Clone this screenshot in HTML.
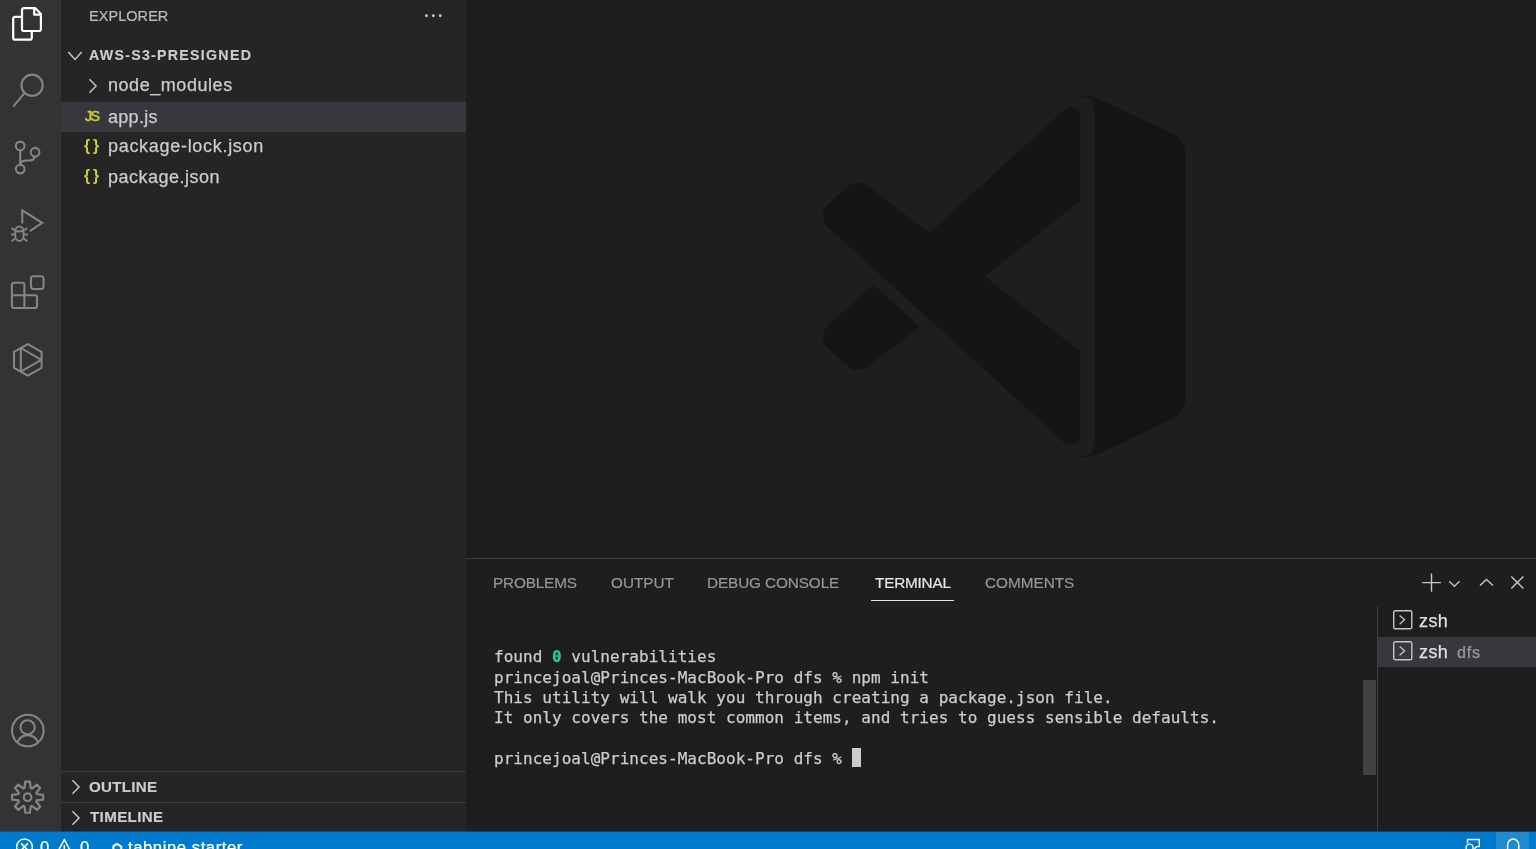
<!DOCTYPE html>
<html lang="en">
<head>
<meta charset="utf-8">
<title>aws-s3-presigned - Visual Studio Code</title>
<style>
*{box-sizing:border-box;margin:0;padding:0}
html,body{width:1536px;height:849px;overflow:hidden;background:#1e1e1e}
body{position:relative;font-family:"Liberation Sans",sans-serif;color:#cccccc}
.abs{position:absolute}
#activity{left:0;top:0;width:61px;height:831px;background:#333333}
#sidebar{left:61px;top:0;width:405px;height:831px;background:#252526}
#editor{left:466px;top:0;width:1070px;height:558px;background:#1e1e1e;overflow:hidden}
#panel{left:466px;top:558px;width:1070px;height:273px;background:#1e1e1e;border-top:1px solid #3d3d3d}
#panel>*{margin-top:-1px}
#status{left:0;top:831px;width:1536px;height:18px;background:#007acc;overflow:hidden}
#sttop{left:0;top:831px;width:1536px;height:1px;background:linear-gradient(to right,#234d69 0,#234d69 61px,#1a4764 61px,#1a4764 466px,#154462 466px)}
.t{position:absolute;white-space:nowrap;line-height:1;will-change:transform}
svg{position:absolute;overflow:visible}
.hdr{color:#bbbbbb;-webkit-text-stroke:0.2px #bbbbbb}
.sec{font-weight:bold;color:#cccccc;-webkit-text-stroke:0.15px #cccccc}
.row{color:#cccccc;-webkit-text-stroke:0.25px currentColor}
.sel{left:0;width:405px;background:#37373d}
.line{left:0;width:405px;height:1px;background:#3c3c3d}
.tab{color:#969696;-webkit-text-stroke:0.2px currentColor}
.tab.on{color:#e7e7e7}
.term{font-family:"DejaVu Sans Mono","Liberation Mono",monospace;color:#cccccc;white-space:pre;-webkit-text-stroke:0.25px #cccccc}
.term b{-webkit-text-stroke:0.25px #23d18b}
.st{color:#ffffff;-webkit-text-stroke:0.25px #ffffff}
</style>
</head>
<body>
<div id="activity" class="abs">
<svg width="61" height="61" style="left:0;top:0" viewBox="0 0 61 61" fill="none" stroke="#ffffff" stroke-width="2.2" stroke-linejoin="round" stroke-linecap="round">
<path d="M24.2 8.1 H35.2 L40.9 14 V29 Q40.9 31 38.9 31 H24 Q22 31 22 29 V10.1 Q22 8.1 24.2 8.1 Z"/>
<path d="M34.2 8.3 V14.7 H40.7"/>
<path d="M21.6 16.9 H15.2 Q13.2 16.9 13.2 18.9 V37.7 Q13.2 39.7 15.2 39.7 H29.8 Q31.8 39.7 31.8 37.7 V31.4"/>
</svg>
<svg width="61" height="61" style="left:0;top:60px" viewBox="0 60 61 61" fill="none" stroke="#858585" stroke-width="2.1" stroke-linecap="round">
<circle cx="32.1" cy="85.2" r="10.6"/><path d="M24.4 93.2 L13.8 105.9"/></svg>
<svg width="61" height="61" style="left:0;top:126px" viewBox="0 126 61 61" fill="none" stroke="#858585" stroke-width="2.1" stroke-linecap="round">
<circle cx="20.2" cy="145.9" r="4.3"/><circle cx="20.2" cy="169.1" r="4.3"/><circle cx="35.1" cy="152.2" r="4.3"/>
<path d="M20.2 150.4 V164.6"/><path d="M34.6 156.7 C33.5 161.6 30 160.2 25 160.6 C22 161 20.4 162.4 20.2 164.4"/></svg>
<svg width="61" height="61" style="left:0;top:194px" viewBox="0 194 61 61" fill="none" stroke="#858585" stroke-width="2" stroke-linecap="butt" stroke-linejoin="miter">
<path d="M22.3 223.6 V210.4 L42.2 222.8 L29.8 231.2"/>
<rect x="15.2" y="226.5" width="8.4" height="14.4" rx="4.2" ry="4.9"/>
<path d="M15.3 231.3 H23.5"/>
<path d="M11.5 228 L14.7 230.3 M10.9 234.6 H14.4 M11.5 241.3 L14.9 238.7 M27.3 228 L24.1 230.3 M27.9 234.6 H24.4 M27.3 241.3 L23.9 238.7"/></svg>
<svg width="61" height="61" style="left:0;top:262px" viewBox="0 262 61 61" fill="none" stroke="#858585" stroke-width="2.1" stroke-linejoin="round">
<rect x="31" y="276.2" width="12.5" height="12.8" rx="2.4"/>
<path d="M24.4 295.3 V284.8 Q24.4 282.8 22.4 282.8 H13.9 Q11.9 282.8 11.9 284.8 V306 Q11.9 308 13.9 308 H35 Q37 308 37 306 V297.3 Q37 295.3 35 295.3 H11.9 M24.4 295.3 V308"/></svg>
<svg width="61" height="61" style="left:0;top:328px" viewBox="0 328 61 61" fill="none" stroke="#858585" stroke-width="2" stroke-linejoin="round">
<path d="M27.7 344.1 L41.6 351.9 V367.8 L27.7 375.6 L14 367.8 V351.9 Z"/>
<path d="M20.8 347.9 V371.8 M20.8 348 L41.3 359.8 L20.8 371.7"/></svg>
<svg width="61" height="61" style="left:0;top:700px" viewBox="0 700 61 61" fill="none" stroke="#858585" stroke-width="2.1">
<circle cx="27.8" cy="730.5" r="15.8"/><circle cx="27.6" cy="727.3" r="7.1"/>
<path d="M17.4 742.3 C19.5 737.3 23 735.1 27.6 735.1 C32.2 735.1 36 737.3 38.2 742.3"/></svg>
<svg width="61" height="61" style="left:0;top:766px" viewBox="0 766 61 61" fill="none" stroke="#858585" stroke-width="2.2" stroke-linejoin="miter">
<path d="M24.46 788.02 L25.33 781.66 L29.87 781.66 L30.74 788.02 L31.87 788.49 L36.98 784.61 L40.19 787.82 L36.31 792.93 L36.78 794.06 L43.14 794.93 L43.14 799.47 L36.78 800.34 L36.31 801.47 L40.19 806.58 L36.98 809.79 L31.87 805.91 L30.74 806.38 L29.87 812.74 L25.33 812.74 L24.46 806.38 L23.33 805.91 L18.22 809.79 L15.01 806.58 L18.89 801.47 L18.42 800.34 L12.06 799.47 L12.06 794.93 L18.42 794.06 L18.89 792.93 L15.01 787.82 L18.22 784.61 L23.33 788.49 Z"/><circle cx="27.6" cy="797.2" r="3.8"/></svg>
</div>
<div id="sidebar" class="abs">
<div class="t hdr" style="left:28.00px;top:8.73px;font-size:14.5px;letter-spacing:0.05px">EXPLORER</div>
<svg width="24" height="8" style="left:360px;top:12px" viewBox="421 12 24 8"><circle cx="426.4" cy="15.8" r="1.45" fill="#c5c5c5"/><circle cx="433.35" cy="15.8" r="1.45" fill="#c5c5c5"/><circle cx="440.3" cy="15.8" r="1.45" fill="#c5c5c5"/></svg>
<svg width="20" height="16" style="left:4.00px;top:48.10px" viewBox="-10 -8 20 16" fill="none" stroke="#c5c5c5" stroke-width="1.5" stroke-linecap="square"><path d="M-6.2 -3.4 L0 3.4 L6.2 -3.4"/></svg>
<div class="t sec" style="left:28.00px;top:48.18px;font-size:14.2px;letter-spacing:1.28px">AWS-S3-PRESIGNED</div>
<svg width="16" height="20" style="left:24.00px;top:75.60px" viewBox="-8 -10 16 20" fill="none" stroke="#c5c5c5" stroke-width="1.5" stroke-linecap="square"><path d="M-3.05 -6.2 L3.05 0 L-3.05 6.2"/></svg>
<div class="t row" style="left:47.40px;top:75.96px;font-size:18px;letter-spacing:0.55px">node_modules</div>
<div class="abs sel" style="top:101.5px;height:30.3px"></div>
<div class="t js" style="left:23.60px;top:109.31px;font-size:14.4px;color:#cbcb41;letter-spacing:-1.6px;-webkit-text-stroke:0.5px #cbcb41">JS</div>
<div class="t row" style="left:47.40px;top:107.76px;font-size:18px;letter-spacing:0.3px">app.js</div>
<div class="t js" style="left:22.60px;top:137.63px;font-size:15.8px;font-weight:bold;color:#cbcb41;letter-spacing:-0.1px">{&thinsp;}</div>
<div class="t row" style="left:47.40px;top:137.36px;font-size:18px;letter-spacing:0.7px">package-lock.json</div>
<div class="t js" style="left:22.60px;top:168.43px;font-size:15.8px;font-weight:bold;color:#cbcb41;letter-spacing:-0.1px">{&thinsp;}</div>
<div class="t row" style="left:47.40px;top:168.16px;font-size:18px;letter-spacing:0.5px">package.json</div>
<div class="abs line" style="top:771px"></div>
<svg width="16" height="20" style="left:6.60px;top:776.70px" viewBox="-8 -10 16 20" fill="none" stroke="#c5c5c5" stroke-width="1.5" stroke-linecap="square"><path d="M-3.05 -6.2 L3.05 0 L-3.05 6.2"/></svg>
<div class="t sec" style="left:28.00px;top:778.62px;font-size:15.1px;letter-spacing:0.3px">OUTLINE</div>
<div class="abs line" style="top:802px"></div>
<svg width="16" height="20" style="left:6.60px;top:807.50px" viewBox="-8 -10 16 20" fill="none" stroke="#c5c5c5" stroke-width="1.5" stroke-linecap="square"><path d="M-3.05 -6.2 L3.05 0 L-3.05 6.2"/></svg>
<div class="t sec" style="left:28.50px;top:808.92px;font-size:15.1px;letter-spacing:0.38px">TIMELINE</div>
</div>
<div id="editor" class="abs">
<svg width="362.5" height="362.5" style="left:357.0px;top:94.5px" viewBox="0 0 100 100">
<path d="M29.3551 38.0415 L12.1872 25.0096C10.589 23.7965 8.35363 23.8959 6.86933 25.2461L1.36303 30.2549C-0.452552 31.9064 -0.454633 34.7627 1.35853 36.417L66.47 95.78 A2.65 2.65 0 0 0 70.9 93.82 L70.9 70.7 L44.6 50.1 L70.9 29.2 L70.9 6.15 A2.65 2.65 0 0 0 66.47 4.19 Z" fill="#151515"/>
<path d="M13.9 52.25 L1.35853 63.5832C-0.454633 65.2374 -0.452552 68.0938 1.36303 69.7453L6.86933 74.7541C8.35363 76.1043 10.589 76.2037 12.1872 74.9905L26.75 63.95 Z" fill="#151515"/>
<path d="M75.8578 99.1263C73.6 100.2 72 100.1 70.8 99.5C72.9 99.9 75 98.5895 75 95.3278V4.67213C75 1.41039 72.9 0.1 70.8 0.5C72 -0.1 73.6 -0.2 75.8578 0.873633L96.4587 10.7807C98.6234 11.8217 100 14.0112 100 16.4132V83.5871C100 85.9891 98.6234 88.1786 96.4586 89.2196L75.8578 99.1263Z" fill="#151515"/>
</svg>
</div>
<div id="panel" class="abs">
<div class="t tab" style="left:26.80px;top:17.25px;font-size:15.3px;letter-spacing:-0.15px">PROBLEMS</div>
<div class="t tab" style="left:144.60px;top:17.25px;font-size:15.3px;letter-spacing:0px">OUTPUT</div>
<div class="t tab" style="left:241.20px;top:17.25px;font-size:15.3px;letter-spacing:-0.1px">DEBUG CONSOLE</div>
<div class="t tab on" style="left:408.50px;top:17.25px;font-size:15.3px;letter-spacing:-0.2px">TERMINAL</div>
<div class="t tab" style="left:519.30px;top:17.25px;font-size:15.3px;letter-spacing:0px">COMMENTS</div>
<div class="abs" style="left:404.79999999999995px;top:41.799999999999955px;width:83.2px;height:1.4px;background:#e7e7e7"></div>
<svg width="120" height="30" style="left:950px;top:10px" viewBox="1416 568 120 30" fill="none" stroke="#c5c5c5" stroke-width="1.45">
<path d="M1431.5 573.4 V591.8 M1422.2 582.6 H1440.9"/>
<path d="M1449.2 581.2 L1454.4 586.3 L1459.6 581.2" stroke-width="1.3"/>
<path d="M1480 585.6 L1486.5 579.4 L1493 585.6"/>
<path d="M1511.3 576.6 L1523.4 588.5 M1523.4 576.6 L1511.3 588.5"/></svg>
<div class="t term" style="left:28.19999999999999px;top:91.26px;font-size:16.0px;letter-spacing:0.034px">found <b style="color:#23d18b">0</b> vulnerabilities</div>
<div class="t term" style="left:28.19999999999999px;top:111.56px;font-size:16.0px;letter-spacing:0.034px">princejoal@Princes-MacBook-Pro dfs % npm init</div>
<div class="t term" style="left:28.19999999999999px;top:131.76px;font-size:16.0px;letter-spacing:0.034px">This utility will walk you through creating a package.json file.</div>
<div class="t term" style="left:28.19999999999999px;top:152.06px;font-size:16.0px;letter-spacing:0.034px">It only covers the most common items, and tries to guess sensible defaults.</div>
<div class="t term" style="left:28.19999999999999px;top:192.86px;font-size:16.0px;letter-spacing:0.034px">princejoal@Princes-MacBook-Pro dfs % </div>
<div class="abs" style="left:385.70000000000005px;top:189.5px;width:9.7px;height:19.6px;background:#cccccc"></div>
<div class="abs" style="left:896.7px;top:122.39999999999998px;width:13.6px;height:94.7px;background:#424242"></div>
<div class="abs" style="left:911px;top:48px;width:1px;height:225px;background:#3f3f3f"></div>
<div class="abs" style="left:912px;top:79px;width:158px;height:29.8px;background:#37373d"></div>
<svg width="22" height="22" style="left:925.80px;top:51.20px" viewBox="-1 -1 22 22" fill="none" stroke="#c5c5c5" stroke-width="1.4"><rect x="0.7" y="0.7" width="18.1" height="18.1" rx="1.6"/><path d="M6.6 5.4 L11.6 9.8 L6.6 14.2" stroke-width="1.3"/></svg>
<svg width="22" height="22" style="left:925.80px;top:82.30px" viewBox="-1 -1 22 22" fill="none" stroke="#c5c5c5" stroke-width="1.4"><rect x="0.7" y="0.7" width="18.1" height="18.1" rx="1.6"/><path d="M6.6 5.4 L11.6 9.8 L6.6 14.2" stroke-width="1.3"/></svg>
<div class="t row" style="left:953.40px;top:53.86px;font-size:18px;color:#e0e0e0;letter-spacing:0.4px">zsh</div>
<div class="t row" style="left:953.40px;top:84.96px;font-size:18px;color:#e0e0e0;letter-spacing:0.4px">zsh</div>
<div class="t row" style="left:990.60px;top:86.49px;font-size:16.2px;color:#9a9a9a;letter-spacing:0.7px">dfs</div>
</div>
<div id="status" class="abs">
<svg width="100" height="18" style="left:0;top:0" viewBox="0 831 100 18" fill="none" stroke="#ffffff" stroke-width="1.5">
<circle cx="24.5" cy="846.8" r="7.8"/><path d="M21.1 843.4 L27.9 850.2 M27.9 843.4 L21.1 850.2"/>
<path d="M64.3 839.6 L56.5 854 M64.3 839.6 L72.1 854" stroke-linecap="round"/><path d="M64.3 845 V850"/></svg>
<div class="t st" style="left:40.10px;top:8.86px;font-size:16.7px;">0</div>
<div class="t st" style="left:80.20px;top:8.86px;font-size:16.7px;">0</div>
<svg width="14" height="8" style="left:110px;top:10px" viewBox="110 841 14 8" fill="none" stroke="#ffffff" stroke-width="2" stroke-linejoin="round"><path d="M113.4 851 V846.2 L117 843.9 L121.3 846.7 V851"/></svg>
<div class="t st" style="left:127.80px;top:8.86px;font-size:16.7px;letter-spacing:0.55px">tabnine starter</div>
<svg width="80" height="18" style="left:1456px;top:0" viewBox="1456 831 80 18" fill="none" stroke="#ffffff" stroke-width="1.4">
<path d="M1467.5 843.2 V839.5 H1479.3 V846.6 H1476.6 L1474.4 848.8" stroke-linejoin="round"/><circle cx="1469.6" cy="847.6" r="3.5"/>
</svg>
<div class="abs" style="left:1496px;top:0;width:33px;height:18px;background:rgba(255,255,255,0.13)"></div>
<svg width="40" height="18" style="left:1496px;top:0" viewBox="1496 831 40 18" fill="none" stroke="#ffffff" stroke-width="1.4"><path d="M1507.6 852 V845 A5.6 6 0 0 1 1518.8 845 V852"/></svg>
</div>
<div id="sttop" class="abs"></div>
</body>
</html>
